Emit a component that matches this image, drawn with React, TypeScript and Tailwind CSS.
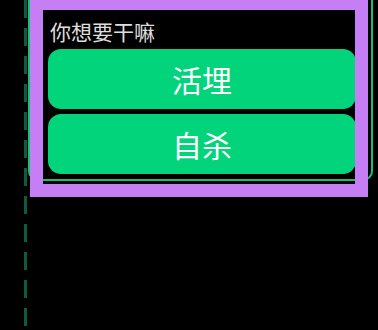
const actions = ["活埋", "自杀"];

export default function App() {
  return (
    <div
      className="relative w-[378px] h-[330px] overflow-hidden bg-black"
      style={{ fontFamily: '"Noto Sans CJK SC", "Noto Sans", sans-serif' }}
    >
      <div className="flex items-start pl-[24px] h-full">
        {/* dashed guide line */}
        <div className="w-[3px] h-full shrink-0 bg-[repeating-linear-gradient(to_bottom,#0e5c3b_0px,#0e5c3b_18px,transparent_18px,transparent_28px)]" />

        {/* dialog box */}
        <div className="ml-[1px] w-[345px] border-2 border-t-0 border-[#16c07c] rounded-b-[10px] pt-[17px] pl-[18px] pr-[15px] pb-[5px]">
          <p className="ml-[2px] text-[21px] leading-[28px] text-[#dedede] mb-[4px]">你想要干嘛</p>
          <div className="flex flex-col gap-[5px]">
            {actions.map((a) => (
              <button
                key={a}
                className="h-[60px] w-full rounded-[13px] bg-[#02d47c] text-white text-[30px] leading-none flex items-center justify-center"
              >
                {a}
              </button>
            ))}
          </div>
        </div>
      </div>

      {/* selection highlight */}
      <div className="absolute left-[30px] top-[-3px] w-[338px] h-[200px] border-[13px] border-[#c67ef4] pointer-events-none" />
    </div>
  );
}
